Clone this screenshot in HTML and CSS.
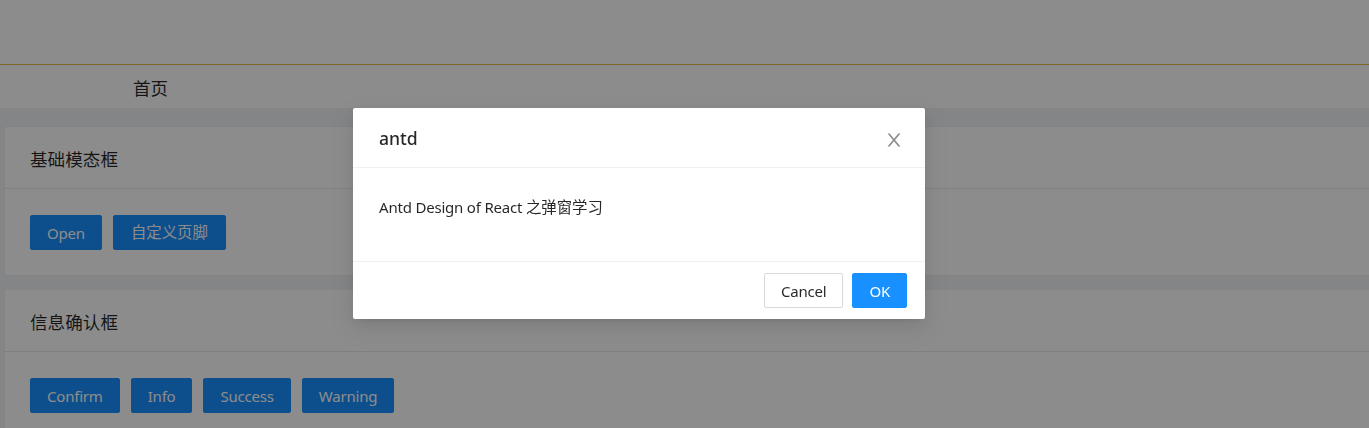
FILE: index.html
```html
<!DOCTYPE html>
<html lang="zh-CN">
<head>
<meta charset="utf-8">
<title>antd modal</title>
<link rel="stylesheet" href="styles.css">
</head>
<body>
<div class="page">
  <header class="topbar"></header>
  <nav class="menu"><span class="menu-item">首页</span></nav>
  <main class="content">
    <section class="card">
      <div class="card-head">基础模态框</div>
      <div class="card-body">
        <button class="btn btn-primary">Open</button>
        <button class="btn btn-primary btn-cjk">自定义页脚</button>
      </div>
    </section>
    <section class="card">
      <div class="card-head">信息确认框</div>
      <div class="card-body">
        <button class="btn btn-primary">Confirm</button>
        <button class="btn btn-primary">Info</button>
        <button class="btn btn-primary">Success</button>
        <button class="btn btn-primary">Warning</button>
      </div>
    </section>
  </main>
</div>
<div class="mask"></div>
<div class="modal">
  <div class="modal-header">
    <div class="modal-title">antd</div>
    <button class="modal-close" aria-label="Close">
      <svg viewBox="64 64 896 896" width="18" height="18" fill="currentColor"><path d="M563.8 512l262.5-312.9c4.4-5.2.7-13.1-6.1-13.1h-79.8c-4.7 0-9.2 2.1-12.3 5.7L511.6 449.8 295.1 191.7c-3-3.6-7.5-5.7-12.3-5.7H203c-6.8 0-10.5 7.9-6.1 13.1L459.4 512 196.9 824.9A7.95 7.95 0 00203 838h79.8c4.7 0 9.2-2.1 12.3-5.7l216.5-258.1 216.5 258.1c3 3.6 7.5 5.7 12.3 5.7h79.8c6.8 0 10.5-7.9 6.1-13.1L563.8 512z"/></svg>
    </button>
  </div>
  <div class="modal-body">Antd Design of React <span class="cjk">之弹窗学习</span></div>
  <div class="modal-footer">
    <button class="btn btn-default">Cancel</button>
    <button class="btn btn-primary">OK</button>
  </div>
</div>
</body>
</html>
```

FILE: styles.css
```css
* { box-sizing: border-box; }
html, body {
  margin: 0;
  padding: 0;
  height: 100%;
  overflow: hidden;
}
body {
  font-family: "Noto Sans", "Noto Sans CJK SC", sans-serif;
  color: rgba(0, 0, 0, 0.85);
  background: #f0f2f5;
}
.page {
  display: flex;
  flex-direction: column;
  min-height: 100%;
}
.topbar {
  height: 65px;
  background: #fff;
  border-bottom: 1px solid #e6bd4c;
}
.menu {
  height: 43px;
  background: #fff;
  display: flex;
  align-items: center;
  padding: 2px 0 0 133px;
}
.menu-item {
  font-size: 17.6px;
  color: rgba(0, 0, 0, 0.85);
}
.content {
  flex: 1;
  padding: 18px 0 0 4px;
  margin-right: -4px;
  display: flex;
  flex-direction: column;
  gap: 13px;
}
.card {
  background: #fff;
  border: 1px solid #f0f0f0;
  border-radius: 2px;
}
.card-head {
  height: 62px;
  padding: 1px 25px 0;
  display: flex;
  align-items: center;
  font-size: 17.6px;
  border-bottom: 1px solid #e8e8e8;
}
.card-body {
  padding: 26px 25px 25px;
  display: flex;
  gap: 11px;
}
.btn {
  font-family: "Noto Sans", "Noto Sans CJK SC", sans-serif;
  height: 35px;
  padding: 1px 16px 0;
  font-size: 15px;
  letter-spacing: -0.2px;
  border-radius: 2px;
  border: 1px solid #d9d9d9;
  background: #fff;
  color: rgba(0, 0, 0, 0.85);
  display: inline-flex;
  align-items: center;
  justify-content: center;
  cursor: pointer;
  line-height: 1;
}
.btn-cjk {
  font-size: 15.4px;
  letter-spacing: 0;
  padding: 1px 17px 0;
}
.btn-primary {
  background: #1890ff;
  border-color: #1890ff;
  color: #fff;
}
.mask {
  position: fixed;
  inset: 0;
  background: rgba(0, 0, 0, 0.45);
}
.modal {
  position: fixed;
  left: 353px;
  top: 108px;
  width: 572px;
  background: #fff;
  border-radius: 2px;
  box-shadow: 0 3px 6px -4px rgba(0,0,0,.12), 0 6px 16px 0 rgba(0,0,0,.08), 0 9px 28px 8px rgba(0,0,0,.05);
}
.modal-header {
  height: 60px;
  padding: 0 26px;
  display: flex;
  align-items: center;
  justify-content: space-between;
  border-bottom: 1px solid #f0f0f0;
}
.modal-title {
  font-size: 17.6px;
  font-weight: 500;
  color: rgba(0, 0, 0, 0.85);
}
.modal-close {
  border: 0;
  background: transparent;
  color: rgba(0, 0, 0, 0.45);
  padding: 4px 0 0;
  width: 62px;
  height: 60px;
  margin-right: -26px;
  display: flex;
  align-items: center;
  justify-content: center;
}
.modal-body {
  height: 93px;
  padding: 27px 26px 0;
  font-size: 15px;
  letter-spacing: -0.2px;
  line-height: 24px;
  color: rgba(0, 0, 0, 0.85);
}
.modal-body .cjk {
  font-size: 15.4px;
  letter-spacing: 0;
}
.modal-footer {
  height: 58px;
  border-top: 1px solid #f0f0f0;
  padding: 0 18px;
  display: flex;
  align-items: center;
  justify-content: flex-end;
  gap: 9px;
}
```
